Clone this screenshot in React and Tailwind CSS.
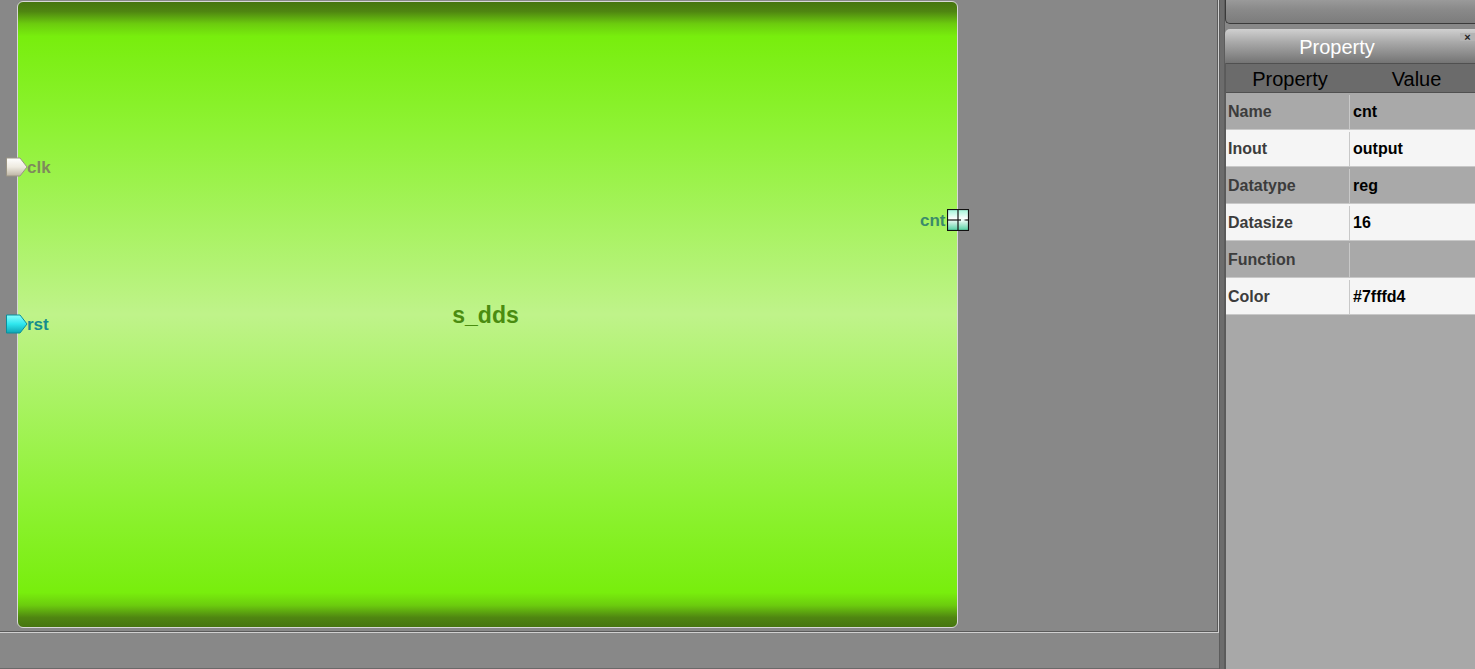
import React from "react";

const rows = [
  ["Name", "cnt"],
  ["Inout", "output"],
  ["Datatype", "reg"],
  ["Datasize", "16"],
  ["Function", ""],
  ["Color", "#7fffd4"],
];

function InPort({ top, id, stops, label, labelColor }) {
  return (
    <div className="absolute left-[6px] flex items-center" style={{ top }}>
      <svg width="22" height="20" viewBox="0 0 22 20">
        <defs>
          <linearGradient id={id} x1="0" y1="0" x2="0" y2="1">
            <stop offset="0" stopColor={stops[0]} />
            <stop offset="0.5" stopColor={stops[1]} />
            <stop offset="1" stopColor={stops[2]} />
          </linearGradient>
        </defs>
        <polygon points="0.5,1 14,1 21,10 14,19 0.5,19" fill={`url(#${id})`} stroke={stops[3]} strokeWidth="1" />
      </svg>
      <span className="-ml-[1px] text-[17px] font-bold leading-none" style={{ color: labelColor }}>
        {label}
      </span>
    </div>
  );
}

export default function App() {
  return (
    <div className="flex h-[669px] w-[1475px] overflow-hidden bg-[#888888] font-['Liberation_Sans',Arial,sans-serif]">
      {/* left: canvas + status */}
      <div className="flex w-[1219px] flex-col">
        <div className="relative h-[633px] border-b border-r border-b-[#d0d0d0] border-r-[#d0d0d0]">
          <div className="h-full w-full border-b border-r border-[#5a5a5a] pl-[17px] pt-[1px]">
            {/* block */}
            <div className="flex h-[627px] w-[941px] items-center justify-center rounded-[6px] border border-[#d8d8d8] bg-[linear-gradient(to_bottom,#467510_0%,#4f8511_1.5%,#6ccc0e_3.5%,#78ee0d_5.5%,#8ef233_20%,#bff38a_50%,#8ef233_80%,#78ee0d_94.5%,#6ccc0e_96.5%,#4f8511_98.5%,#467510_100%)]">
              <span className="pr-[4px] pt-[2px] text-[23px] font-bold text-[#4a8c10]">s_dds</span>
            </div>
          </div>

          <InPort top={157} id="clkg" stops={["#ffffff", "#eeeae0", "#bcb4a4", "#9a9484"]} label="clk" labelColor="#7f8a5c" />
          <InPort top={314} id="rstg" stops={["#8affff", "#2ee6ee", "#0fa5b5", "#0a8f9c"]} label="rst" labelColor="#168d8d" />

          {/* output port */}
          <div className="absolute left-[920px] top-[209px] flex items-center">
            <span className="text-[17px] font-bold leading-none text-[#3b8b6a]">cnt</span>
            <svg width="22" height="22" viewBox="0 0 22 22" className="ml-[1px]">
              <defs>
                <linearGradient id="cntg" x1="0" y1="0" x2="0" y2="1">
                  <stop offset="0" stopColor="#9ff5d8" />
                  <stop offset="0.45" stopColor="#ffffff" />
                  <stop offset="1" stopColor="#4fcf9f" />
                </linearGradient>
              </defs>
              <rect x="0.5" y="0.5" width="21" height="21" fill="url(#cntg)" stroke="#111" strokeWidth="1.2" />
              <line x1="11" y1="0.5" x2="11" y2="21.5" stroke="#111" strokeWidth="1.2" />
              <line x1="0.5" y1="11" x2="21.5" y2="11" stroke="#111" strokeWidth="1.2" />
              <polygon points="14,13 19,11 14,9" fill="#eafff7" />
            </svg>
          </div>
        </div>
        <div className="flex-1 border-b border-[#6a6a6a]" />
      </div>

      {/* splitter */}
      <div className="w-[6px] border-x border-[#5c5c5c] bg-[#6c6c6c]" />

      {/* right panel */}
      <div className="flex flex-1 flex-col">
        <div className="h-[24px] rounded-bl-[5px] border-b border-l border-[#3a3a3a] bg-[linear-gradient(to_bottom,#9a9a9a,#8a8a8a_40%,#7c7c7c)]" />
        <div className="h-[5px]" />
        <div className="relative flex h-[34px] items-center justify-center rounded-tl-[5px] bg-[linear-gradient(to_bottom,#d0d0d0,#a8a8a8_40%,#8a8a8a_75%,#747474)]">
          <span className="pr-[26px] pt-[2px] text-[20px] text-white">Property</span>
          <div className="absolute right-0 top-[4px] flex h-[8px] w-[15px] items-center justify-center bg-[#b4b4b4]">
            <span className="text-[11px] font-bold leading-none text-[#222]">×</span>
          </div>
        </div>
        <div className="flex flex-1 flex-col border-l border-[#5a5a5a] bg-[#a8a8a8]">
          <div className="flex h-[30px] items-center border-y border-[#505050] bg-[#6b6b6b] pt-[2px] text-[20px] text-black">
            <div className="w-[128px] text-center">Property</div>
            <div className="flex-1 pl-[4px] text-center">Value</div>
          </div>
          {rows.map(([k, v], i) => (
            <div
              key={k}
              className={`flex h-[37px] items-center border-b border-[#c8c8c8] pt-[2px] text-[16px] font-bold ${i % 2 === 0 ? "bg-[#a9a9a9]" : "bg-[#f5f5f5]"}`}
            >
              <div className="flex h-full w-[124px] items-center border-r border-[#c8c8c8] pl-[2px] text-[#3c3c3c]">{k}</div>
              <div className="pl-[3px] text-black">{v}</div>
            </div>
          ))}
        </div>
      </div>
    </div>
  );
}
